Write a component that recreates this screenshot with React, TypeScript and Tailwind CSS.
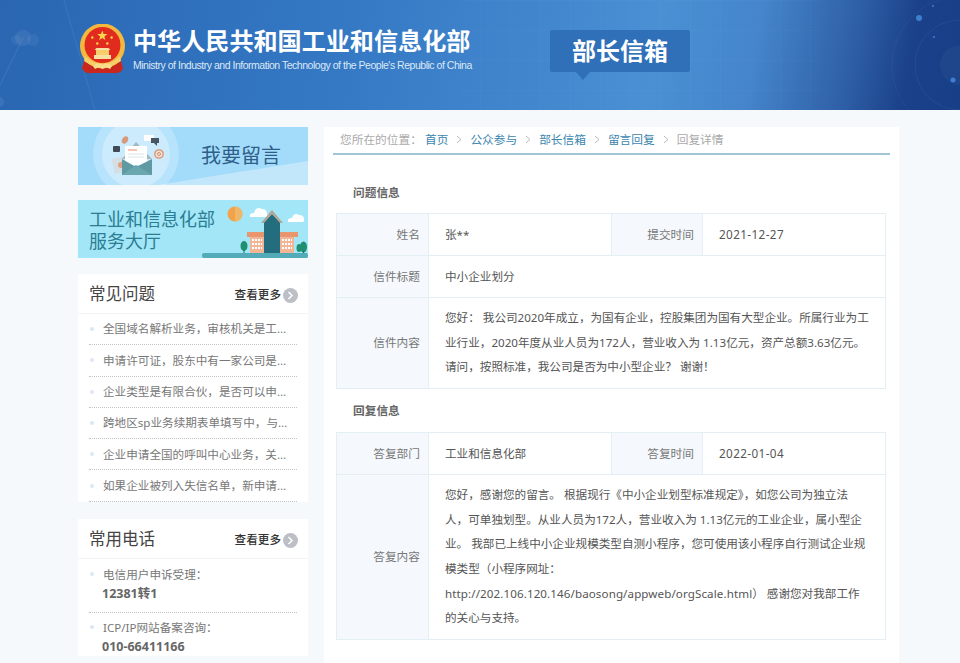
const faqs = [
  '全国域名解析业务，审核机关是工业和信息化部吗？',
  '申请许可证，股东中有一家公司是外资企业怎么办？',
  '企业类型是有限合伙，是否可以申请增值电信业务？',
  '跨地区sp业务续期表单填写中，与上年度不一致怎么办',
  '企业申请全国的呼叫中心业务，关于注册资金的要求',
  '如果企业被列入失信名单，新申请许可证是否受影响',
];

const crumbs = ['首页', '公众参与', '部长信箱', '留言回复'];

function Emblem() {
  return (
    <svg width="47" height="50" viewBox="0 0 47 50" className="shrink-0">
      <path d="M6 34 L3 44 Q5 50 12 49 L35 49 Q42 50 44 44 L41 34 Z" fill="#c9261d" />
      <circle cx="23.5" cy="22" r="22.5" fill="#f3b93f" />
      <circle cx="23.5" cy="21" r="18" fill="#e02b1e" />
      <path d="M6 32 Q23.5 48 41 32 L42 37 Q23.5 50 5 37 Z" fill="#f6cf6a" />
      <path d="M14 42 Q19 37 23.5 41 Q28 37 33 42 L31 45 Q27 42 23.5 45 Q20 42 16 45 Z" fill="#f8dd8c" />
      <rect x="15" y="31" width="17" height="4" fill="#f8e0a0" />
      <rect x="17" y="26" width="13" height="5" fill="#f6cf6a" />
      <path d="M15.5 26 H31.5 L29.5 24 H17.5 Z" fill="#f8e0a0" />
      <path d="M23.3 6.5 l1.3 3.5 3.7.1 -2.9 2.3 1 3.6 -3.1-2.1 -3.1 2.1 1-3.6 -2.9-2.3 3.7-.1 Z" fill="#f9d64c" />
      <circle cx="13.3" cy="13.5" r="1.2" fill="#f9d64c" />
      <circle cx="32.6" cy="13.5" r="1.2" fill="#f9d64c" />
      <circle cx="18.3" cy="19.5" r="1.2" fill="#f9d64c" />
      <circle cx="28.3" cy="19.5" r="1.2" fill="#f9d64c" />
    </svg>
  );
}

// faint lines, cloud, grid and dots on the header background
function HeaderDecor() {
  return (
    <svg className="absolute inset-0 h-full w-full" viewBox="0 0 960 110" preserveAspectRatio="none">
      <defs>
        <pattern id="grid" width="30" height="30" patternUnits="userSpaceOnUse">
          <path d="M30 0 H0 V30" stroke="#ffffff" strokeOpacity="0.035" fill="none" />
        </pattern>
      </defs>
      <rect x="460" width="360" height="110" fill="url(#grid)" />
      <path d="M64 0 L95 110" stroke="#ffffff" strokeOpacity="0.08" />
      <path d="M0 85 L23 38" stroke="#ffffff" strokeOpacity="0.1" />
      <circle cx="23" cy="38" r="8" fill="#ffffff" fillOpacity="0.07" />
      <circle cx="16" cy="40" r="5" fill="#ffffff" fillOpacity="0.05" />
      <circle cx="33" cy="40" r="6" fill="#ffffff" fillOpacity="0.05" />
      <circle cx="-1" cy="102" r="5" fill="#ffffff" fillOpacity="0.08" />
      <circle cx="960" cy="65" r="20" fill="#ffffff" fillOpacity="0.03" />
      <circle cx="960" cy="65" r="45" fill="none" stroke="#ffffff" strokeOpacity="0.05" />
      <circle cx="960" cy="65" r="68" fill="none" stroke="#ffffff" strokeOpacity="0.04" />
      <circle cx="919" cy="18" r="3" fill="#3f7fd0" />
      <circle cx="953" cy="80" r="2.5" fill="#3f7fd0" />
      <circle cx="933" cy="6" r="1" fill="#3f7fd0" />
      <circle cx="934" cy="37" r="1" fill="#3f7fd0" />
    </svg>
  );
}

function EnvelopeArt() {
  return (
    <svg viewBox="0 0 230 58" className="absolute inset-0 h-full w-full">
      <path d="M80 58 L230 34 L230 58 Z" fill="#c2e7fb" />
      <circle cx="58" cy="27" r="43" fill="#ffffff" fillOpacity="0.22" />
      <circle cx="58" cy="27" r="34" fill="#ffffff" fillOpacity="0.3" />
      <rect x="35" y="31" width="11" height="15" fill="#d5dee2" transform="rotate(-12 40 38)" />
      <circle cx="43" cy="38" r="3" fill="#e2a184" />
      <rect x="35" y="19" width="7" height="6" rx="1" fill="#3f4a55" />
      <ellipse cx="47" cy="13" rx="2.8" ry="4" fill="#d99a7c" transform="rotate(30 47 13)" />
      <rect x="66" y="8" width="10" height="6" fill="#ffffff" />
      <path d="M73 11 h8 v5 h-2 v3 l-3 -3 h-3 Z" fill="#465866" />
      <circle cx="81" cy="27" r="4.2" fill="#f4e1d6" stroke="#d98f6d" strokeWidth="1.3" />
      <circle cx="81" cy="27" r="1.5" fill="none" stroke="#d98f6d" />
      <path d="M44 32 L58 15 L74 32 Z" fill="#a3b8bd" />
      <rect x="47" y="19" width="22" height="19" fill="#ffffff" />
      <path d="M50 23 h9" stroke="#e58d68" strokeWidth="1" />
      <path d="M50 27 h16 M50 30 h16" stroke="#dbe6ea" strokeWidth="1" />
      <path d="M44 32 L58 40 L74 32 V48 H44 Z" fill="#5f9aa3" />
      <path d="M44 48 L58 38 L74 48 Z" fill="#6ba7af" />
    </svg>
  );
}

function BuildingArt() {
  return (
    <svg viewBox="0 0 230 58" className="absolute inset-0 h-full w-full">
      <circle cx="157" cy="14" r="7.5" fill="#f2a34a" />
      <path d="M157 6.5 a7.5 7.5 0 0 1 0 15 Z" fill="#eeb76a" />
      <path d="M172 17 q-1-4 4-4 q2-7 8-4 q5 0 5 5 q2 3-1 3 Z" fill="#ffffff" />
      <path d="M210 22 q-1-4 4-4 q2-6 7-3 q5 0 5 4 q1 3-2 3 Z" fill="#ffffff" />
      <rect x="124" y="53" width="106" height="5" rx="2" fill="#53aab9" />
      <rect x="172" y="37" width="14" height="16" fill="#f2b596" />
      <rect x="169" y="32" width="17" height="5" fill="#e89670" />
      <rect x="202" y="37" width="14" height="16" fill="#f2b596" />
      <rect x="202" y="32" width="18" height="5" fill="#e89670" />
      <path d="M186 53 V22 L194 14 L202 22 V53 Z" fill="#246d7f" />
      <path d="M183 23 L194 10 L205 23 L202 23 L194 14 L186 23 Z" fill="#b0a596" />
      <path d="M174 40 h10 M174 44 h10 M174 48 h10 M204 40 h10 M204 44 h10 M204 48 h10" stroke="#ffffff" strokeWidth="2" strokeDasharray="2 1" />
      <ellipse cx="166" cy="46" rx="3.5" ry="5" fill="#1f8f6f" />
      <rect x="165.5" y="50" width="1" height="3" fill="#1f6f5f" />
      <ellipse cx="221" cy="48" rx="2.5" ry="4" fill="#1f8f6f" />
      <ellipse cx="225.5" cy="47" rx="3.5" ry="5.5" fill="#1f8f6f" />
      <rect x="225" y="51" width="1" height="2" fill="#1f6f5f" />
    </svg>
  );
}

function CardHeader({ title }: { title: string }) {
  return (
    <div className="flex h-10 items-center justify-between border-b border-[#f1f3f5] pl-[11px] pr-[10px] pt-[2px]">
      <h3 className="text-[16.5px] font-normal text-[#444]">{title}</h3>
      <a className="flex items-center gap-[2px] text-[11.6px] font-medium text-[#333]">
        查看更多
        <span className="mt-[2px] flex h-[15px] w-[15px] items-center justify-center rounded-full bg-[#bcbfc6]">
          <svg width="7" height="9" viewBox="0 0 7 9">
            <path d="M1.5 1 L5 4.5 L1.5 8" stroke="#ffffff" strokeWidth="1.5" fill="none" />
          </svg>
        </span>
      </a>
    </div>
  );
}

function Bullet() {
  return <span className="mr-[9px] h-1 w-1 shrink-0 rounded-full bg-[#dce6f5]" />;
}

function Sidebar() {
  return (
    <aside className="w-[230px] shrink-0">
      <div className="relative h-[58px] overflow-hidden bg-[#a3dcfb]">
        <EnvelopeArt />
        <span className="absolute left-[123px] top-[15px] text-[20px] leading-[28px] text-[#2f5f88]">我要留言</span>
      </div>
      <div className="relative mt-[15px] h-[58px] overflow-hidden bg-[#a2e6f7]">
        <BuildingArt />
        <div className="absolute left-[11px] top-[8px] text-[18px] leading-[22px] text-[#2a7d92]">
          工业和信息化部
          <br />
          服务大厅
        </div>
      </div>

      <section className="mt-4 bg-white">
        <CardHeader title="常见问题" />
        <ul className="px-[11px]">
          {faqs.map((q) => (
            <li key={q} className="flex h-[31.3px] items-center border-b border-dotted border-[#c4c4c4] pl-[1px] text-[11.6px] text-[#777]">
              <Bullet />
              <span className="w-[187px] truncate">{q}</span>
            </li>
          ))}
        </ul>
      </section>

      <section className="mt-[17px] bg-white">
        <CardHeader title="常用电话" />
        <ul className="px-[11px] pt-[6px]">
          <li className="border-b border-dotted border-[#c4c4c4] pb-[9px] pl-[1px] text-[11.6px] text-[#777]">
            <div className="flex h-[19px] items-center">
              <Bullet />
              电信用户申诉受理：
            </div>
            <div className="pl-[12px] text-[12.5px] font-bold leading-[19px] text-[#666]">12381转1</div>
          </li>
          <li className="pl-[1px] pt-[5px] text-[11.6px] text-[#777]">
            <div className="flex h-[19px] items-center">
              <Bullet />
              ICP/IP网站备案咨询：
            </div>
            <div className="pl-[12px] text-[12.5px] font-bold leading-[19px] text-[#666]">010-66411166</div>
          </li>
        </ul>
      </section>
    </aside>
  );
}

const labelCls = 'border-r border-[#e3eff5] bg-[#f5f9fd] pr-[8px] text-right text-[11.7px] text-[#777] flex items-center justify-end';

function Row({ label, children, h }: { label: string; children: React.ReactNode; h?: string }) {
  return (
    <div className={`flex border-b border-[#e3eff5] last:border-b-0 ${h ?? 'h-[42px]'}`}>
      <div className={`${labelCls} w-[92px] shrink-0`}>{label}</div>
      <div className="flex flex-1 items-center pl-4 pr-4 text-[11.6px] text-[#555]">{children}</div>
    </div>
  );
}

function DoubleRow(props: { l1: string; v1: string; l2: string; v2: string }) {
  return (
    <div className="flex h-[42px] border-b border-[#e3eff5]">
      <div className={`${labelCls} w-[92px] shrink-0`}>{props.l1}</div>
      <div className="flex w-[183px] shrink-0 items-center border-r border-[#e3eff5] pl-4 text-[11.6px] text-[#555]">{props.v1}</div>
      <div className={`${labelCls} w-[91px] shrink-0`}>{props.l2}</div>
      <div className="flex flex-1 items-center pl-4 text-[11.7px] tracking-[0.4px] text-[#555]">{props.v2}</div>
    </div>
  );
}

export default function App() {
  return (
    <div className="h-[663px] overflow-hidden bg-[#f5f9fc] font-['Noto_Sans','Noto_Sans_CJK_SC',sans-serif]">
      {/* header */}
      <header className="relative h-[110px] overflow-hidden bg-[linear-gradient(100deg,#2a66b2_0%,#3478c4_35%,#4a90d3_68%,#4585cb_78%,#2e5fa6_88%,#1a4189_94%,#173f88_100%)]">
        <HeaderDecor />
        <div className="relative flex h-full items-start pl-[79px] pt-[24px]">
          <Emblem />
          <div className="ml-[7px] w-[339px] pt-[1px]">
            <h1 className="whitespace-nowrap text-[24.1px] font-bold leading-[32px] text-white">中华人民共和国工业和信息化部</h1>
            <p className="mt-[1px] whitespace-nowrap font-['Liberation_Sans',sans-serif] text-[10.5px] leading-[14px] tracking-[-0.48px] text-[#dbe8f6]">
              Ministry of Industry and Information Technology of the People's Republic of China
            </p>
          </div>
          <div className="relative ml-[78px] mt-[6px] flex h-[42px] w-[140px] items-center justify-center rounded-[2px] bg-[#2f70b8]">
            <span className="text-[24px] font-bold text-white">部长信箱</span>
            <span className="absolute left-[26px] top-full h-0 w-0 border-x-[7px] border-t-[8px] border-x-transparent border-t-[#2f70b8]" />
          </div>
        </div>
      </header>

      {/* body */}
      <div className="flex items-start pl-[78px] pt-[17px]">
        <Sidebar />

        <main className="ml-4 min-h-[540px] w-[575px] shrink-0 bg-white px-[9px]">
          <div className="flex h-[28px] items-center gap-[8px] border-b-2 border-[#a3c4d6] pl-[7px] text-[11.7px]">
            <span className="mr-[-6px] w-[83px] text-[#aaa]">您所在的位置：</span>
            {crumbs.map((c) => (
              <span key={c} className="flex items-center gap-[8px]">
                <a className="text-[#3b85ae]">{c}</a>
                <svg width="6" height="9" viewBox="0 0 6 9">
                  <path d="M1 1 L5 4.5 L1 8" stroke="#bbbbbb" fill="none" />
                </svg>
              </span>
            ))}
            <span className="text-[#aaa]">回复详情</span>
          </div>

          <div className="pr-[4px] pl-[3px]">
            <h4 className="pb-[12px] pl-[17px] pt-[29px] text-[11.7px] font-bold leading-[17px] text-[#666]">问题信息</h4>
            <div className="border border-[#e3eff5]">
              <DoubleRow l1="姓名" v1="张**" l2="提交时间" v2="2021-12-27" />
              <Row label="信件标题">中小企业划分</Row>
              <Row label="信件内容" h="h-[90px]">
                <p className="leading-[24.6px]">
                  您好： 我公司2020年成立，为国有企业，控股集团为国有大型企业。所属行业为工业行业，2020年度从业人员为172人，营业收入为 1.13亿元，资产总额3.63亿元。 请问，按照标准，我公司是否为中小型企业？ 谢谢！
                </p>
              </Row>
            </div>

            <h4 className="pb-[13px] pl-[17px] pt-[13px] text-[11.7px] font-bold leading-[17px] text-[#666]">回复信息</h4>
            <div className="border border-[#e3eff5]">
              <DoubleRow l1="答复部门" v1="工业和信息化部" l2="答复时间" v2="2022-01-04" />
              <Row label="答复内容" h="h-[164px]">
                <p className="leading-[24.6px]">
                  您好，感谢您的留言。 根据现行《中小企业划型标准规定》，如您公司为独立法人，可单独划型。从业人员为172人，营业收入为 1.13亿元的工业企业，属小型企业。 我部已上线中小企业规模类型自测小程序，您可使用该小程序自行测试企业规模类型（小程序网址：
                  <span className="tracking-[0.1px]">http://202.106.120.146/baosong/appweb/orgScale.html</span>
                  ） 感谢您对我部工作的关心与支持。
                </p>
              </Row>
            </div>
          </div>
        </main>
      </div>
    </div>
  );
}
